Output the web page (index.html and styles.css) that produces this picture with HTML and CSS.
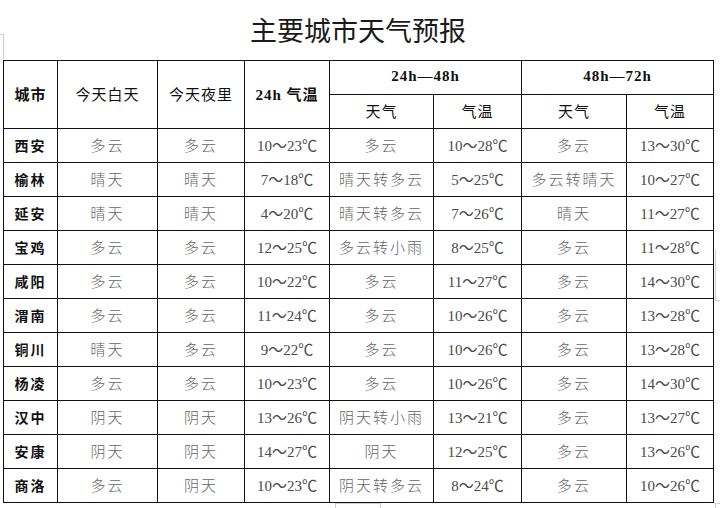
FILE: index.html
```html
<!DOCTYPE html>
<html lang="zh">
<head>
<meta charset="utf-8">
<link rel="stylesheet" href="styles.css">
</head>
<body>
<div class="page">
  <h1 class="title">主要城市天气预报</h1>
  <table class="wx">
    <colgroup>
      <col class="c1"><col class="c2"><col class="c3"><col class="c4">
      <col class="c5"><col class="c6"><col class="c7"><col class="c8">
    </colgroup>
    <thead>
      <tr class="h1">
        <th rowspan="2" class="b">城市</th>
        <th rowspan="2">今天白天</th>
        <th rowspan="2">今天夜里</th>
        <th rowspan="2" class="b">24h 气温</th>
        <th colspan="2" class="b">24h—48h</th>
        <th colspan="2" class="b">48h—72h</th>
      </tr>
      <tr class="h2">
        <th>天气</th><th>气温</th><th>天气</th><th>气温</th>
      </tr>
    </thead>
    <tbody>
      <tr><td class="city">西安</td><td>多云</td><td>多云</td><td class="t">10～23℃</td><td>多云</td><td class="t">10～28℃</td><td>多云</td><td class="t">13～30℃</td></tr>
      <tr><td class="city">榆林</td><td>晴天</td><td>晴天</td><td class="t">7～18℃</td><td>晴天转多云</td><td class="t">5～25℃</td><td>多云转晴天</td><td class="t">10～27℃</td></tr>
      <tr><td class="city">延安</td><td>晴天</td><td>晴天</td><td class="t">4～20℃</td><td>晴天转多云</td><td class="t">7～26℃</td><td>晴天</td><td class="t">11～27℃</td></tr>
      <tr><td class="city">宝鸡</td><td>多云</td><td>多云</td><td class="t">12～25℃</td><td>多云转小雨</td><td class="t">8～25℃</td><td>多云</td><td class="t">11～28℃</td></tr>
      <tr><td class="city">咸阳</td><td>多云</td><td>多云</td><td class="t">10～22℃</td><td>多云</td><td class="t">11～27℃</td><td>多云</td><td class="t">14～30℃</td></tr>
      <tr><td class="city">渭南</td><td>多云</td><td>多云</td><td class="t">11～24℃</td><td>多云</td><td class="t">10～26℃</td><td>多云</td><td class="t">13～28℃</td></tr>
      <tr><td class="city">铜川</td><td>晴天</td><td>多云</td><td class="t">9～22℃</td><td>多云</td><td class="t">10～26℃</td><td>多云</td><td class="t">13～28℃</td></tr>
      <tr><td class="city">杨凌</td><td>多云</td><td>多云</td><td class="t">10～23℃</td><td>多云</td><td class="t">10～26℃</td><td>多云</td><td class="t">14～30℃</td></tr>
      <tr><td class="city">汉中</td><td>阴天</td><td>阴天</td><td class="t">13～26℃</td><td>阴天转小雨</td><td class="t">13～21℃</td><td>多云</td><td class="t">13～27℃</td></tr>
      <tr><td class="city">安康</td><td>阴天</td><td>阴天</td><td class="t">14～27℃</td><td>阴天</td><td class="t">12～25℃</td><td>多云</td><td class="t">13～26℃</td></tr>
      <tr><td class="city">商洛</td><td>多云</td><td>阴天</td><td class="t">10～23℃</td><td>阴天转多云</td><td class="t">8～24℃</td><td>多云</td><td class="t">10～26℃</td></tr>
    </tbody>
  </table>
  <div class="mark mark-tl"></div>
  <div class="mark mark-r"></div>
  <div class="mark mark-b"></div>
  <div class="mark mark-br"></div>
</div>
</body>
</html>
```

FILE: styles.css
```css
html, body {
  margin: 0;
  padding: 0;
  background: #fff;
}
.page {
  position: relative;
  width: 720px;
  height: 508px;
  overflow: hidden;
}
.title {
  margin: 0;
  height: 60px;
  line-height: 60px;
  text-align: center;
  padding-right: 4px;
  font-family: "Noto Sans CJK SC", sans-serif;
  font-weight: 400;
  font-size: 27px;
  color: #1a1a1a;
  letter-spacing: 0;
}
.wx {
  margin-left: 3px;
  width: 710px;
  table-layout: fixed;
  border-collapse: collapse;
  font-family: "Liberation Serif", "Noto Sans CJK SC", serif;
}
.c1 { width: 54px; }
.c2 { width: 100px; }
.c3 { width: 87px; }
.c4 { width: 85px; }
.c5 { width: 104px; }
.c6 { width: 88px; }
.c7 { width: 105px; }
.c8 { width: 87px; }
.wx th, .wx td {
  border: 1px solid #111;
  padding: 0 0 2px 0;
  text-align: center;
  vertical-align: middle;
  white-space: nowrap;
  overflow: hidden;
}
.wx th {
  font-size: 15px;
  font-weight: 400;
  color: #111;
  letter-spacing: 1px;
}
.wx th.b {
  font-weight: 700;
}
.h1 th { height: 31px; }
.h2 th { height: 31px; }
.wx td {
  height: 31px;
  font-size: 15px;
  color: #666;
  font-weight: 300;
  letter-spacing: 2px;
}
.wx td.t {
  letter-spacing: 0;
  color: #4a4a4a;
  font-weight: 400;
}
.wx td.city {
  color: #111;
  font-weight: 700;
  font-size: 14px;
  letter-spacing: 2px;
}
.mark {
  position: absolute;
  border-color: #cfcfcf;
  border-style: solid;
  border-width: 0;
}
.mark-tl {
  left: 0;
  top: 34px;
  width: 3px;
  height: 24px;
  border-right-width: 1px;
  border-top-width: 1px;
}
.mark-r {
  left: 715px;
  top: 250px;
  width: 6px;
  height: 50px;
  border-left-width: 1px;
  border-bottom-width: 1px;
}
.mark-b {
  left: 335px;
  top: 503px;
  width: 44px;
  height: 8px;
  border-left-width: 1px;
  border-right-width: 1px;
  border-top-width: 1px;
}
.mark-br {
  left: 715px;
  top: 503px;
  width: 6px;
  height: 8px;
  border-left-width: 1px;
  border-top-width: 1px;
}
```
